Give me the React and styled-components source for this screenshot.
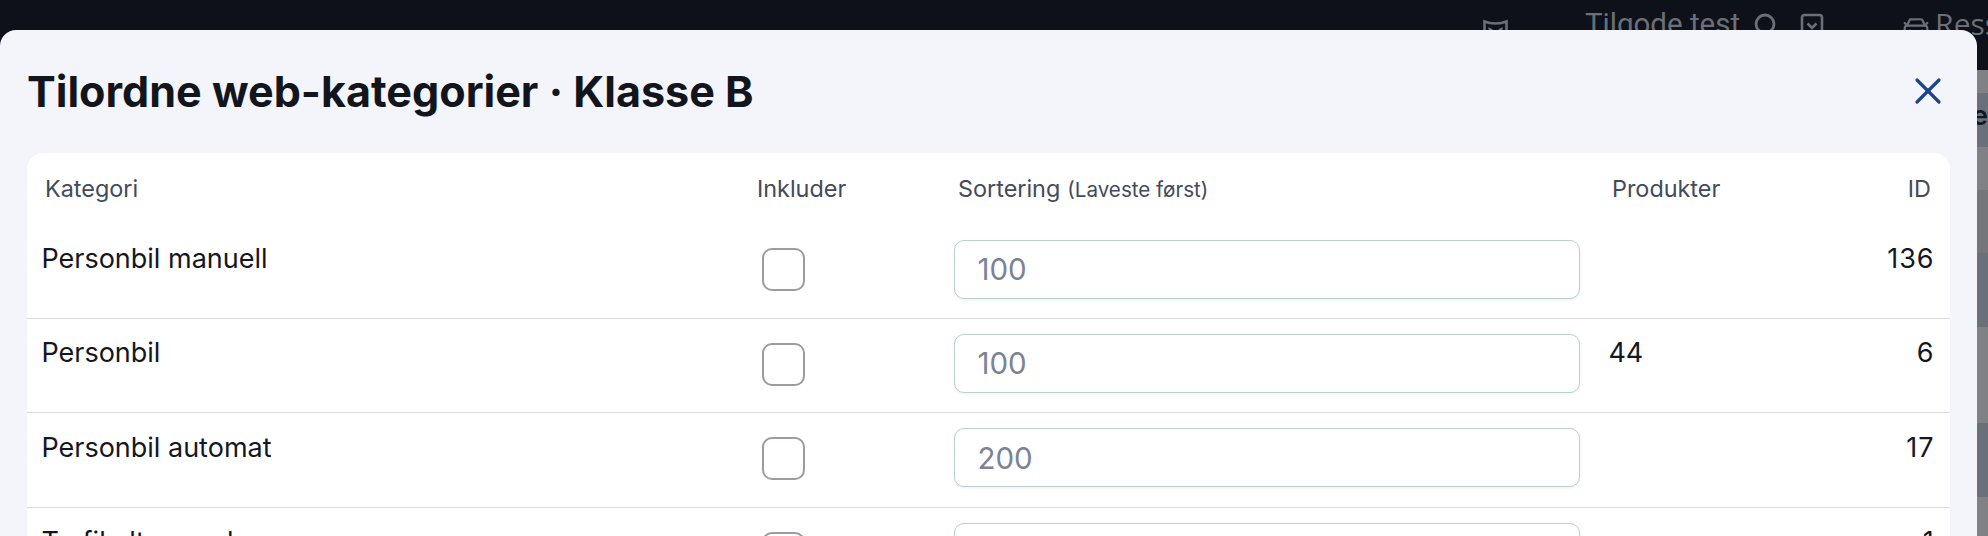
import React from 'react';
import styled, { createGlobalStyle } from 'styled-components';
import { X, CarFront } from 'lucide-react';

const Global = createGlobalStyle`
  html, body { margin: 0; padding: 0; height: 100%; overflow: hidden; background: #808184; }
  * { box-sizing: border-box; }
`;

const Page = styled.div`
  position: relative;
  width: 1988px;
  height: 536px;
  overflow: hidden;
  font-family: Inter, "Liberation Sans", sans-serif;
`;

const TopBar = styled.header`
  height: 70px;
  background: #0e111a;
  display: flex;
  align-items: flex-start;
  padding-left: 1483px;
  color: #6c6f76;
  white-space: nowrap;
`;

const TopIcon = styled.svg`
  flex: none;
  margin-top: ${p => p.$top}px;
  margin-left: ${p => p.$left}px;
`;

const TopText = styled.span`
  flex: none;
  margin-left: ${p => p.$left}px;
  margin-top: 6px;
  font-family: ${p => p.$brand ? '"Open Sans", sans-serif' : 'Roboto, sans-serif'};
  font-size: ${p => p.$brand ? 30 : 29.5}px;
  font-weight: ${p => p.$brand ? 500 : 400};
  line-height: 36px;
`;

const Backdrop = styled.div`
  display: flex;
  flex-direction: column;
`;

const Band = styled.div`
  height: ${p => p.$h}px;
  background: ${p => p.$bg};
  display: flex;
  justify-content: flex-end;
  color: #14171f;
  font-size: 27px;
  font-weight: 600;
  line-height: 46px;
  overflow: hidden;
`;

const Modal = styled.section`
  position: absolute;
  left: 0;
  top: 30px;
  width: 1977px;
  height: 540px;
  background: #f4f5fa;
  border-radius: 16px 16px 0 0;
  padding: 0 27px 0 27px;
`;

const ModalHeader = styled.div`
  height: 123px;
  display: flex;
  align-items: center;
  justify-content: space-between;
  padding-bottom: 2px;
`;

const Title = styled.h2`
  margin: 0;
  font-size: 43.1px;
  font-weight: 700;
  line-height: 56px;
  color: #12151c;
`;

const CloseButton = styled.button`
  display: flex;
  width: 44px;
  height: 44px;
  padding: 0;
  border: 0;
  background: none;
  color: #1e4389;
`;

const Card = styled.div`
  background: #fff;
  border-radius: 16px 16px 0 0;
`;

const Columns = `
  display: grid;
  grid-template-columns: 721px 192px 654px 200px 155px;
`;

const HeadRow = styled.div`
  ${Columns}
  height: 71.6px;
  align-items: center;
  padding-bottom: 1px;
  color: #434a5a;
  font-size: 23.4px;
`;

const HeadCell = styled.div`
  padding: 0 ${p => p.$right ? '18px' : '0'} 0 ${p => p.$inset}px;
  text-align: ${p => p.$right ? 'right' : 'left'};
`;

const Hint = styled.small`
  font-size: 20.6px;
  margin-left: 7px;
`;

const Row = styled.div`
  ${Columns}
  height: 94.4px;
  border-bottom: 1.6px solid #d9dadc;
  color: #14171f;
  font-size: 27px;
  line-height: 39.6px;
`;

const Cell = styled.div`
  padding: 14.4px;
  text-align: ${p => p.$right ? 'right' : 'left'};
  letter-spacing: ${p => p.$right ? '1px' : '0'};
  white-space: nowrap;
`;

const Check = styled.input.attrs({ type: 'checkbox' })`
  appearance: none;
  display: block;
  width: 43px;
  height: 43px;
  margin: 9.4px 0 0;
  background: #fff;
  border: 2.4px solid #9b9ba3;
  border-radius: 10px;
`;

const SortInput = styled.input`
  display: block;
  width: 100%;
  height: 59px;
  margin-top: 0.6px;
  padding: 0 22px;
  background: #fff;
  border: 1.6px solid #b9d0d2;
  border-radius: 10px;
  box-shadow: 0 1px 3px rgba(30, 50, 60, 0.08);
  font-family: inherit;
  font-size: 29.5px;
  outline: none;
  &::placeholder { color: #7b8397; opacity: 1; }
`;

const rows = [
  { name: 'Personbil manuell', sort: '100', products: '', id: '136' },
  { name: 'Personbil', sort: '100', products: '44', id: '6' },
  { name: 'Personbil automat', sort: '200', products: '', id: '17' },
  { name: 'Trafikalt grunnkurs', sort: '', products: '', id: '1' },
];

const bands = [
  [23, '#808184'], [54, '#6a7079'], [43, '#808184'], [63, '#74767b'],
  [74, '#6a7079'], [96, '#808184'], [74, '#6a7079'], [39, '#808184'],
];

export default function App() {
  return (
    <Page>
      <Global />
      <TopBar>
        <TopIcon $top={19} $left={0} width="25" height="22" viewBox="0 0 25 22" fill="none" stroke="currentColor" strokeWidth="2.6">
          <path d="M1.500 2.500c3.500 1.500 7 2 11 2s7.500-.5 11-2v9c0 5-5 9-11 9S1.500 16.500 1.500 11.500z" />
          <path fill="currentColor" stroke="none" d="M5 8.500c2 0 4.500 1 5 3-2 1-4.500.5-5-3zM20 8.500c-2 0-4.500 1-5 3 2 1 4.500.5 5-3z" />
        </TopIcon>
        <TopText $left={77}>Tilgode test</TopText>
        <TopIcon $top={13} $left={12.5} width="24" height="28" viewBox="0 0 24 28" fill="none" stroke="currentColor" strokeWidth="2.8">
          <circle cx="12" cy="11" r="9" />
          <path d="M18 18l5 6" />
        </TopIcon>
        <TopIcon $top={13} $left={23.5} width="24" height="26" viewBox="0 0 24 26" fill="none" stroke="currentColor" strokeWidth="2.6">
          <rect x="2" y="2" width="20" height="23" rx="2.500" />
          <path d="M7.500 10.500l4.500 4.500 4.500-4.500" />
        </TopIcon>
        <TopIcon as={CarFront} $top={13} $left={77} size={30} strokeWidth={1.8} />
        <TopText $left={4} $brand>Ressurser</TopText>
      </TopBar>
      <Backdrop>
        {bands.map(([h, bg], i) => (
          <Band key={i} $h={h} $bg={bg}>{i === 1 ? 'e' : ''}</Band>
        ))}
      </Backdrop>
      <Modal>
        <ModalHeader>
          <Title>Tilordne web-kategorier · Klasse B</Title>
          <CloseButton aria-label="Lukk">
            <X size={44} strokeWidth={1.75} />
          </CloseButton>
        </ModalHeader>
        <Card>
          <HeadRow>
            <HeadCell $inset={18}>Kategori</HeadCell>
            <HeadCell $inset={9}>Inkluder</HeadCell>
            <HeadCell $inset={18}>Sortering<Hint>(Laveste først)</Hint></HeadCell>
            <HeadCell $inset={18}>Produkter</HeadCell>
            <HeadCell $right $inset={0}>ID</HeadCell>
          </HeadRow>
          {rows.map(r => (
            <Row key={r.id}>
              <Cell>{r.name}</Cell>
              <Cell><Check aria-label={r.name} /></Cell>
              <Cell><SortInput placeholder={r.sort} /></Cell>
              <Cell>{r.products}</Cell>
              <Cell $right>{r.id}</Cell>
            </Row>
          ))}
        </Card>
      </Modal>
    </Page>
  );
}
